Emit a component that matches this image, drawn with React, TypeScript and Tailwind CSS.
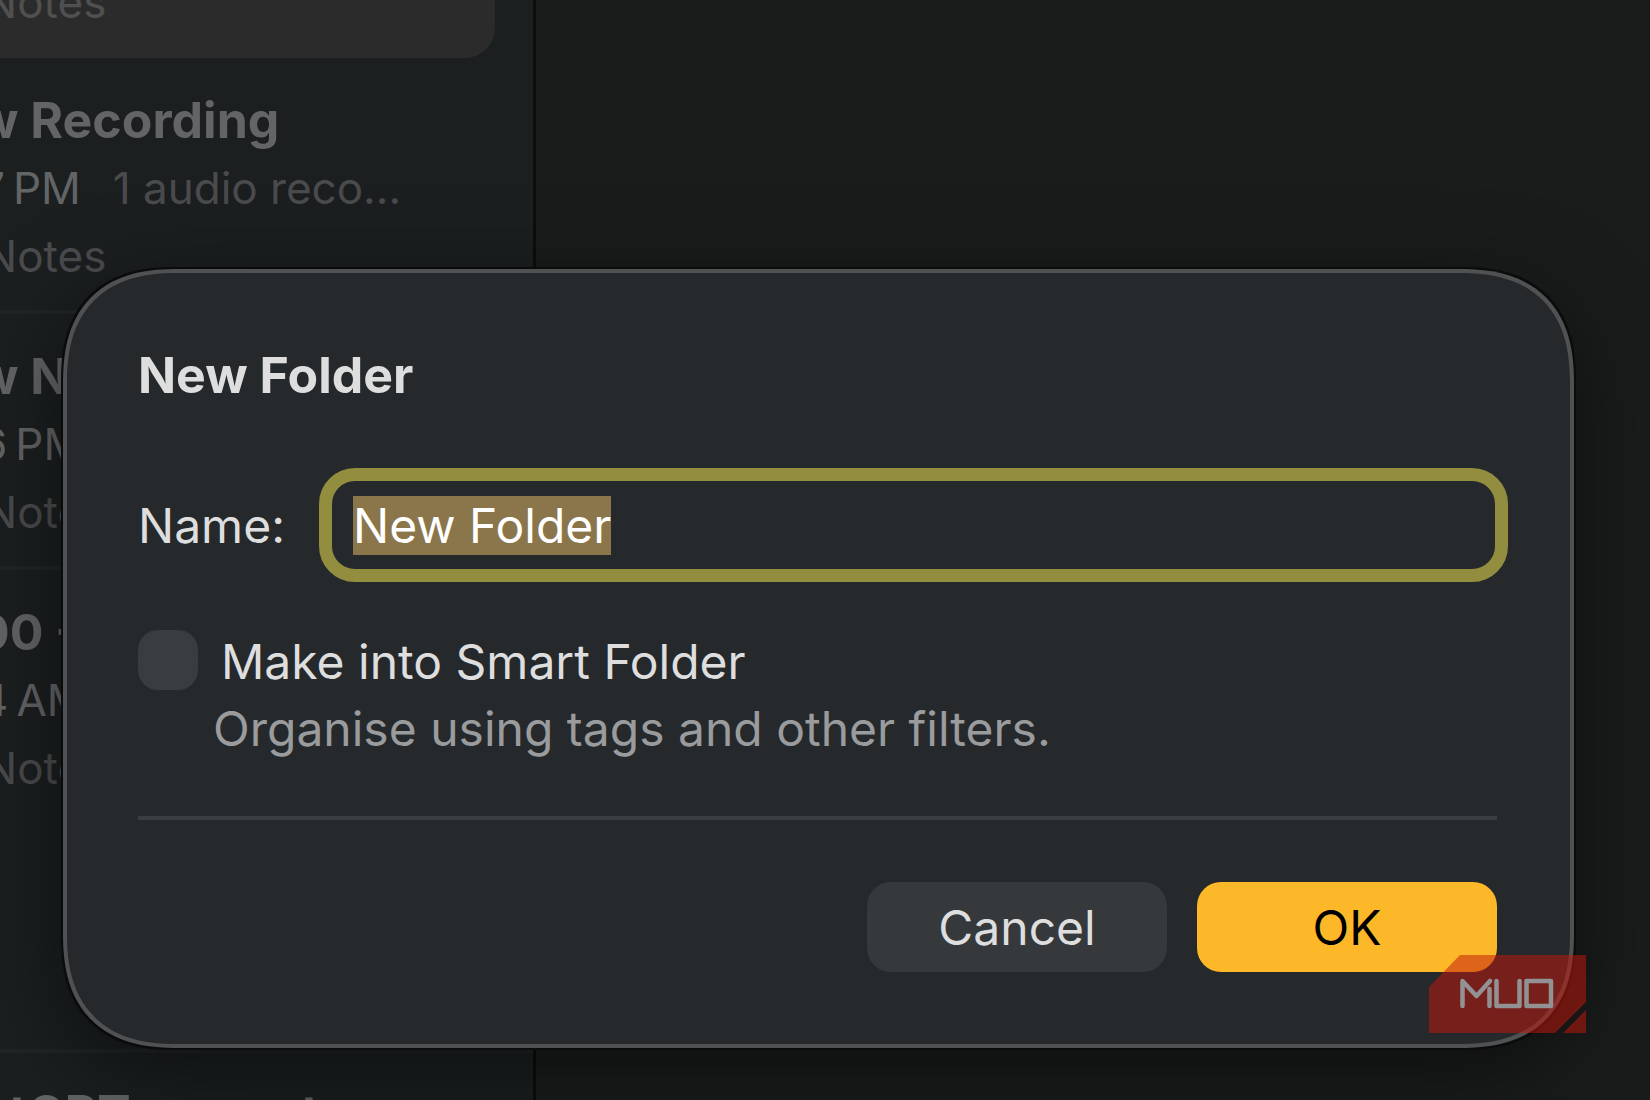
import { useEffect, useRef, useState } from "react"

const notes = [
  { title: "w Recording", time: "7\u202fPM", preview: "1 audio reco...", folder: "Notes" },
  { title: "w Note", time: "6\u202fPM", preview: "", folder: "Notes" },
  { title: "00 -", time: "4\u202fAM", preview: "", folder: "Notes" },
]

function NoteRow({ title, time, preview, folder }: { title: string; time: string; preview: string; folder: string }) {
  return (
    <li className="h-64 border-b-4 border-[#212526] pt-[28px] whitespace-nowrap last:border-transparent">
      <h3 className="-ml-1 text-[50px] leading-[68px] font-bold text-[#636466]">{title}</h3>
      <p className="flex gap-8 text-[44px] leading-[68px] text-[#4a4b4d]">
        <span className="text-[#636466]">{time}</span>
        <span>{preview}</span>
      </p>
      <p className="pl-1 text-[44px] leading-[68px] text-[#4a4b4d]">{folder}</p>
    </li>
  )
}

function Sidebar() {
  return (
    <aside className="w-[536px] shrink-0 overflow-hidden border-r-3 border-[#0c0d0d] bg-[#1b1f20]">
      <div className="mr-[38px] flex h-[58px] items-end rounded-br-[30px] bg-[#2a2b2a]">
        <p className="-ml-5 pb-[22px] pl-1 text-[44px] leading-[68px] text-[#4f504f]">Notes</p>
      </div>
      <ul className="-ml-5">
        {notes.map((note) => (
          <NoteRow key={note.title} {...note} />
        ))}
      </ul>
      <div className="mt-[223px] -ml-5 border-t-4 border-[#212526] pt-[26px]">
        <h3 className="text-[50px] leading-[68px] font-bold text-[#636466]">atGPT prompt</h3>
      </div>
    </aside>
  )
}

function NewFolderDialog() {
  const [name, setName] = useState("New Folder")
  const [smart, setSmart] = useState(false)
  const inputRef = useRef<HTMLInputElement>(null)

  useEffect(() => {
    inputRef.current?.focus()
    inputRef.current?.select()
  }, [])

  return (
    <form
      role="dialog"
      aria-labelledby="dialog-title"
      onSubmit={(e) => e.preventDefault()}
      className="w-full rounded-[115px] border-4 border-[#4f5153] bg-[#25292c] pt-[72px] pr-[73px] pb-[72px] pl-[71px] text-[48px] leading-[60px] text-[#dedede] shadow-[0_0_0_2px_#0a0b0b,0_24px_90px_rgba(0,0,0,0.5)] [corner-shape:superellipse(1.3)]"
    >
      <h2 id="dialog-title" className="text-[50px] font-bold">New Folder</h2>

      <div className="mt-[63px] -mr-[11px] flex items-center gap-[34px]">
        <label htmlFor="folder-name" className="pt-0.5">Name:</label>
        <input
          ref={inputRef}
          id="folder-name"
          type="text"
          value={name}
          onChange={(e) => setName(e.target.value)}
          className="h-[114px] min-w-0 flex-1 rounded-[36px] border-13 border-[#938e3f] bg-transparent px-[21px] text-white caret-transparent outline-none selection:bg-[#8a764a] selection:text-white"
        />
      </div>

      <div className="mt-[48px] flex items-start gap-[23px]">
        <input
          id="smart-folder"
          type="checkbox"
          checked={smart}
          onChange={(e) => setSmart(e.target.checked)}
          className="size-[60px] shrink-0 appearance-none rounded-[20px] bg-[#393d40] checked:bg-[#fdb829]"
        />
        <label htmlFor="smart-folder" className="pt-0.5">Make into Smart Folder</label>
      </div>
      <p className="mt-[7px] pl-[75px] text-[#9a9b9d]">Organise using tags and other filters.</p>

      <hr className="mt-[57px] border-t-4 border-[#3a3d41]" />

      <div className="mt-[62px] flex justify-end gap-[30px]">
        <button type="button" className="h-[90px] w-[300px] rounded-[24px] bg-[#36393c] pt-0.5">Cancel</button>
        <button type="submit" className="h-[90px] w-[300px] rounded-[24px] bg-[#fdb829] pt-0.5 text-black">OK</button>
      </div>
    </form>
  )
}

function Watermark() {
  return (
    <svg width="157" height="78" viewBox="0 0 157 78" fill="none" role="img" aria-label="MUO">
      <path d="M31 0H157V47L126 78H0V32Z" fill="#c1170b" fillOpacity="0.52" />
      <path d="M157 55V78H134Z" fill="#c1170b" fillOpacity="0.52" />
      <g stroke="#929294" strokeWidth="4.5" strokeLinecap="round" strokeLinejoin="round">
        <path d="M33.500 51V26L47.500 41L61 26M60.500 34V51" />
        <path d="M67.500 26V51H90.500V26" />
        <path d="M97.500 26H122V51H97.500Z" />
      </g>
    </svg>
  )
}

export default function App() {
  return (
    <div className="relative flex h-screen overflow-hidden bg-[#1a1c1b] font-['Inter',sans-serif] font-[430]">
      <Sidebar />
      <main className="flex-1"></main>

      <div className="absolute inset-0 pt-[269px] pr-[76px] pl-[63px]">
        <div className="relative">
          <NewFolderDialog />
          <div className="absolute -right-3 bottom-[15px]">
            <Watermark />
          </div>
        </div>
      </div>
    </div>
  )
}
